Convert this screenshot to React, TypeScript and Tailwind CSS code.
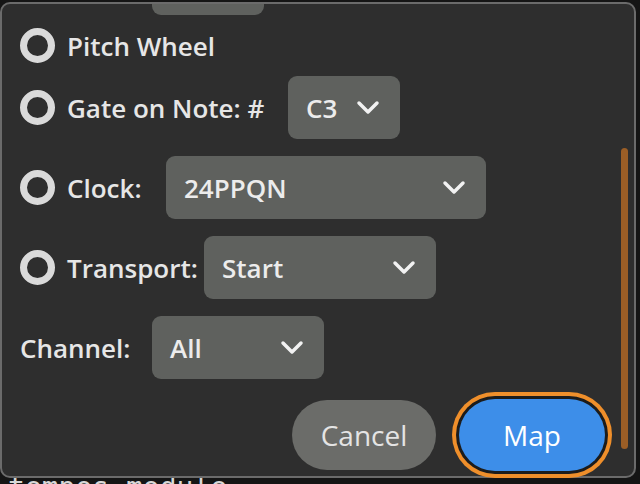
const Chevron = () => (
  <svg width="24" height="15" viewBox="0 0 24 15" fill="none" className="shrink-0">
    <polyline points="3,3 12,12 21,3" stroke="#f2f2f2" strokeWidth="3.5" strokeLinecap="round" strokeLinejoin="round" />
  </svg>
);

const Radio = () => (
  <div className="h-[35px] w-[35px] shrink-0 rounded-full border-[7px] border-[#dadada]" />
);

interface SelectProps {
  value: string;
  width: string;
}

const Select = ({ value, width }: SelectProps) => (
  <div className={`flex h-[63px] shrink-0 items-center justify-between rounded-[9px] bg-[#5f615e] pl-[18px] pr-[20px] ${width}`}>
    <span className="text-[#ececec]">{value}</span>
    <Chevron />
  </div>
);

export default function App() {
  return (
    <div className="h-[484px] w-[640px] overflow-hidden bg-[#151515] font-['Open_Sans',sans-serif] text-[26px] font-semibold leading-none text-[#e6e6e6]">
      <div className="relative mt-[2px] flex h-[476px] w-[636px] rounded-[10px] border-2 border-[#6b6b6b] bg-[#2e2e2e]">
        <div className="flex flex-1 flex-col pl-[18px] pr-[16px]">
          <div className="ml-[132px] h-[11px] w-[112px] rounded-b-[9px] bg-[#5f615e]" />

          <div className="mt-[13px] flex h-[35px] items-center gap-[12px]">
            <Radio />
            <span>Pitch Wheel</span>
          </div>

          <div className="mt-[13px] flex items-center gap-[12px]">
            <Radio />
            <span className="w-[209px]">Gate on Note: #</span>
            <Select value="C3" width="w-[112px]" />
          </div>

          <div className="mt-[17px] flex items-center gap-[12px]">
            <Radio />
            <span className="w-[87px]">Clock:</span>
            <Select value="24PPQN" width="w-[320px]" />
          </div>

          <div className="mt-[17px] flex items-center gap-[12px]">
            <Radio />
            <span className="w-[125px]">Transport:</span>
            <Select value="Start" width="w-[232px]" />
          </div>

          <div className="mt-[17px] flex items-center">
            <span className="w-[132px]">Channel:</span>
            <Select value="All" width="w-[172px]" />
          </div>

          <div className="mt-[20px] flex h-[72px] items-center justify-end gap-[23px] text-[28px] font-medium">
            <button className="flex h-[70px] w-[144px] items-center justify-center rounded-full bg-[#6b6c69] text-[#e4e4e4]">
              Cancel
            </button>
            <button className="flex h-[72px] w-[146px] items-center justify-center rounded-full bg-[#3d8ee9] text-white shadow-[0_0_0_3px_#1c1c1c,0_0_0_7px_#ef8f2b]">
              Map
            </button>
          </div>
        </div>

        <div className="mb-[27px] mr-[6px] mt-[144px] w-[7px] rounded-full bg-[#9b5e26]" />
      </div>

      <div className="-mt-[4px] pl-[8px] font-['DejaVu_Sans_Mono',monospace] text-[28px] font-normal leading-none text-[#d8d8d8]">
        tempos module
      </div>
    </div>
  );
}
